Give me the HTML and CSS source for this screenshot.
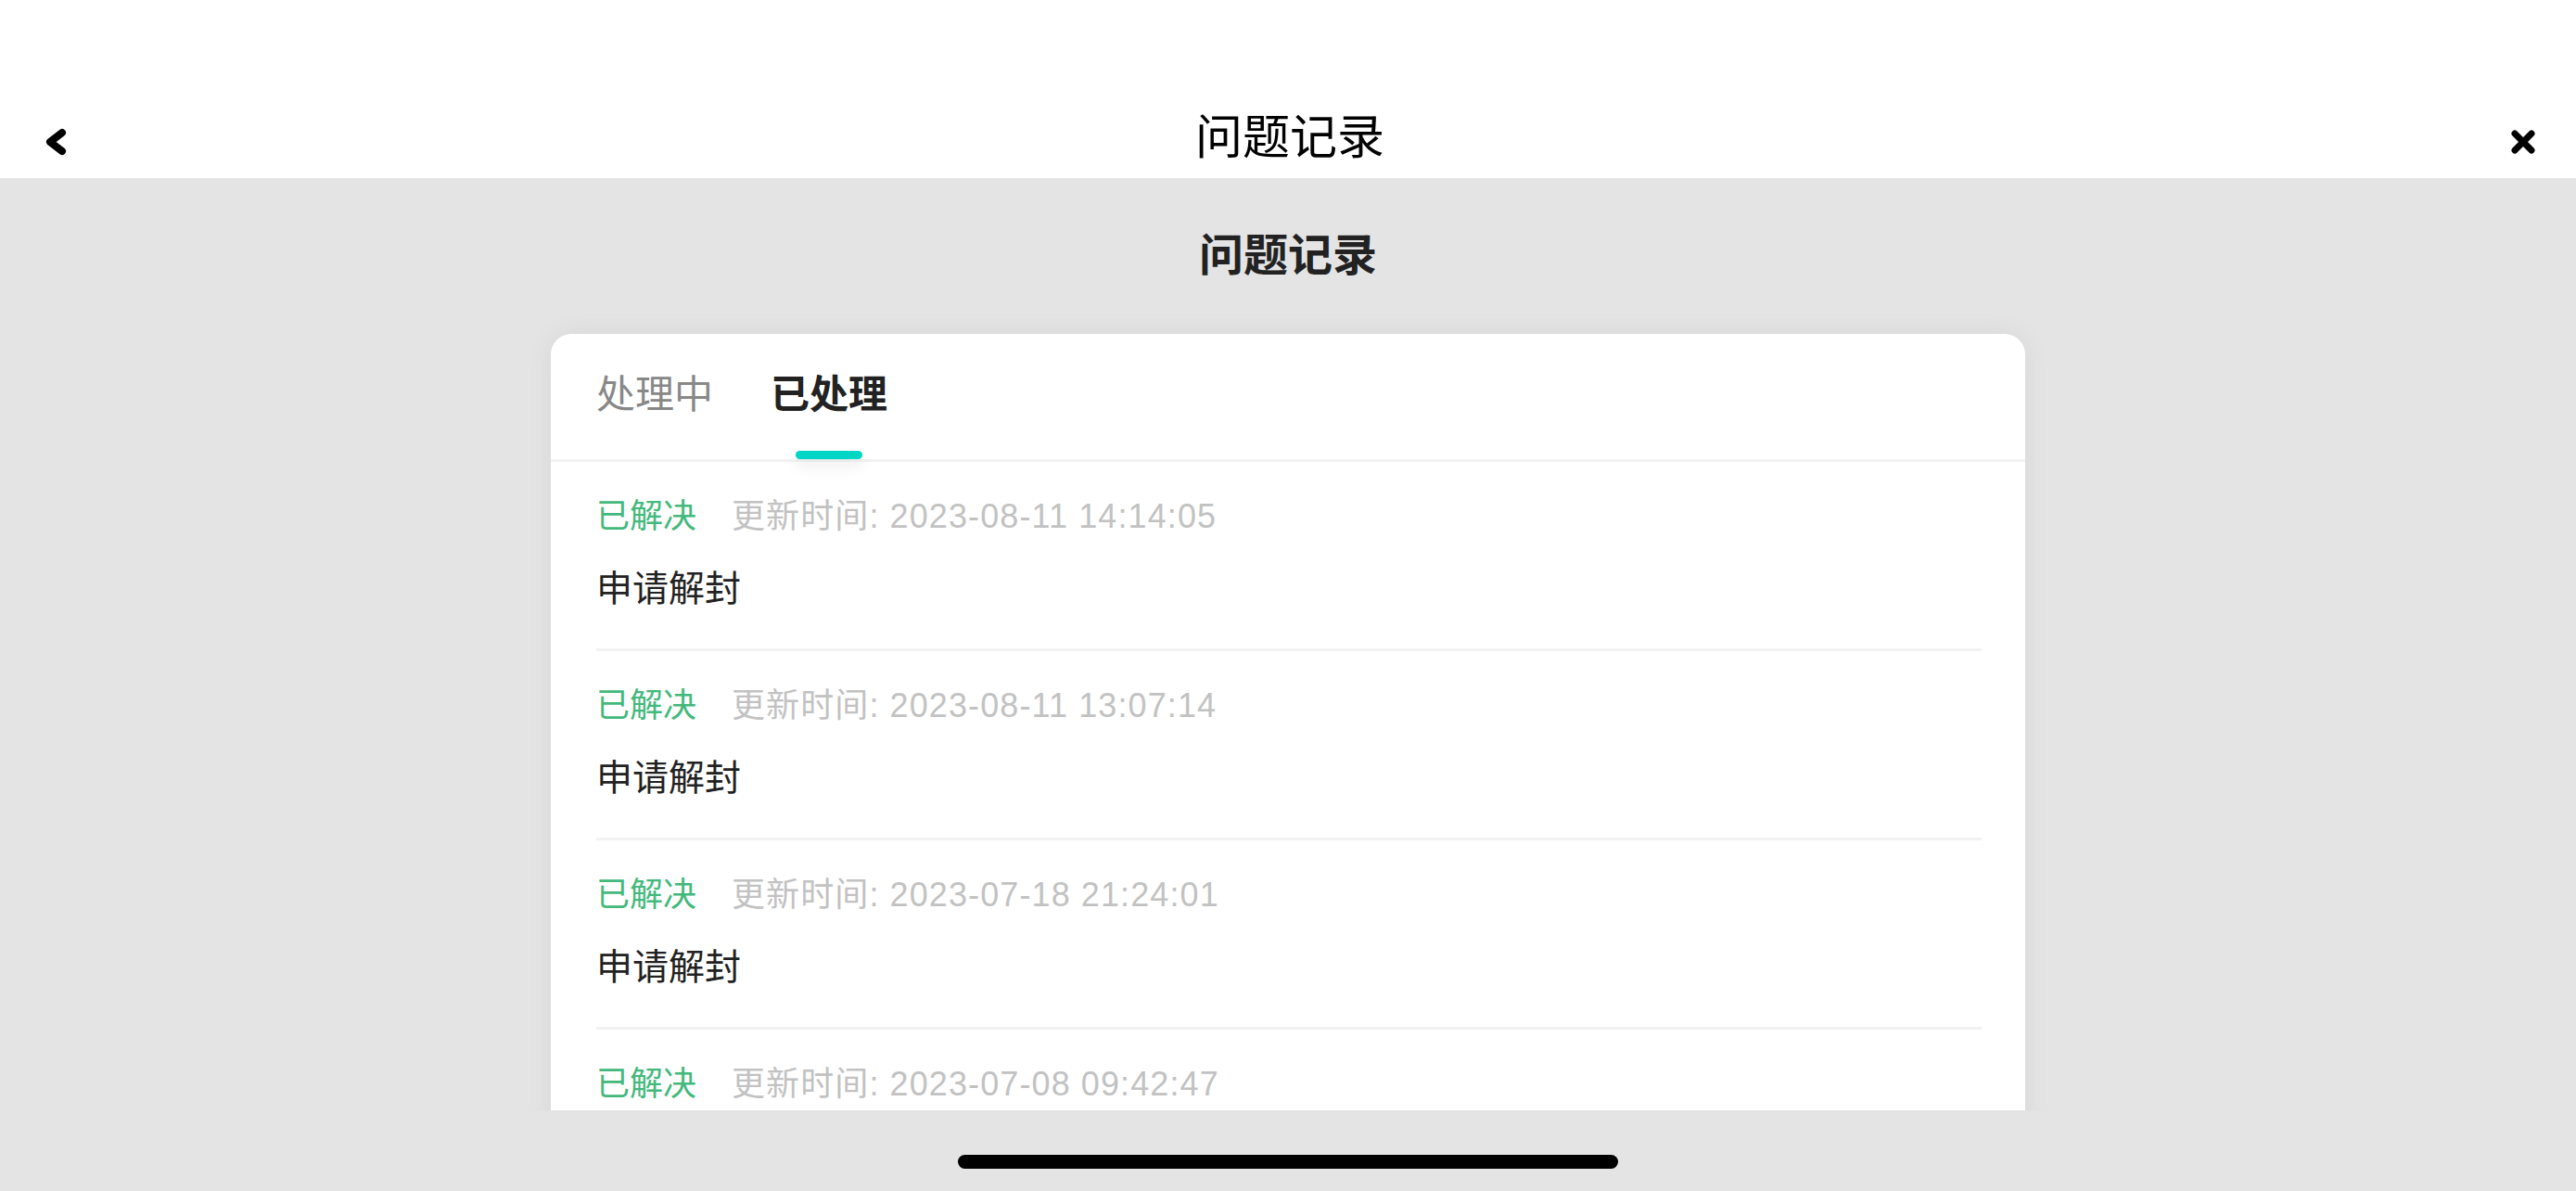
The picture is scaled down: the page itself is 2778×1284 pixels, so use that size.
FILE: index.html
```html
<!DOCTYPE html>
<html lang="zh-CN">
<head>
  <meta charset="UTF-8" />
  <title>问题记录</title>
  <meta name="viewport" content="width=device-width, initial-scale=1.0" />
  <link rel="stylesheet" href="styles.css">
</head>
<body>

  <div class="navbar">
    <div class="nav-row">
      <svg class="nav-icon" width="30" height="30" viewBox="0 0 30 30">
        <polyline points="21,5 8,15 21,25" fill="none" stroke="#000" stroke-width="8" stroke-linecap="round" stroke-linejoin="round" />
      </svg>
      <div class="nav-title">问题记录</div>
      <svg class="nav-icon" width="30" height="30" viewBox="0 0 30 30">
        <line x1="6" y1="6" x2="24" y2="24" stroke="#000" stroke-width="7" stroke-linecap="round" />
        <line x1="24" y1="6" x2="6" y2="24" stroke="#000" stroke-width="7" stroke-linecap="round" />
      </svg>
    </div>
  </div>

  <div class="content">
    <h1 class="page-title">问题记录</h1>

    <div class="card">
      <div class="tabs">
        <div class="tab">
          <span>处理中</span>
        </div>
        <div class="tab active">
          <span>已处理</span>
          <i class="tab-line"></i>
        </div>
      </div>

      <div class="list">
        <div class="item">
          <div class="item-head">
            <span class="status">已解决</span>
            <span class="time">更新时间: 2023-08-11 14:14:05</span>
          </div>
          <div class="item-title">申请解封</div>
        </div>
        <div class="item">
          <div class="item-head">
            <span class="status">已解决</span>
            <span class="time">更新时间: 2023-08-11 13:07:14</span>
          </div>
          <div class="item-title">申请解封</div>
        </div>
        <div class="item">
          <div class="item-head">
            <span class="status">已解决</span>
            <span class="time">更新时间: 2023-07-18 21:24:01</span>
          </div>
          <div class="item-title">申请解封</div>
        </div>
        <div class="item">
          <div class="item-head">
            <span class="status">已解决</span>
            <span class="time">更新时间: 2023-07-08 09:42:47</span>
          </div>
          <div class="item-title">申请解封</div>
        </div>
      </div>
    </div>
  </div>

  <div class="home">
    <div class="home-bar"></div>
  </div>

</body>
</html>
```

FILE: styles.css
```css
html, body {
  margin: 0;
  height: 100%;
}
body {
  background-color: #e4e4e4;
  font-family: 'Liberation Sans', 'Noto Sans CJK SC', sans-serif;
  display: flex;
  flex-direction: column;
  overflow: hidden;
}
.navbar {
  background: #fff;
  padding-top: 106px;
  height: 86px;
}
.nav-row {
  height: 86px;
  display: flex;
  align-items: center;
  justify-content: space-between;
  padding: 0 42px 0 46px;
}
.nav-icon {
  margin-top: 8px;
}
.nav-title {
  font-size: 51px;
  color: #000;
  line-height: 88px;
}
.content {
  flex: 1;
  overflow: hidden;
  padding-top: 54px;
}
.page-title {
  margin: 0 0 54px;
  text-align: center;
  font-size: 48px;
  line-height: 60px;
  font-weight: bold;
  color: #222;
}
.card {
  width: 1590px;
  margin: 0 auto;
  background: #fff;
  border-radius: 22px 22px 0 0;
  box-shadow: 0 0 30px rgba(0, 0, 0, 0.06);
  min-height: 1000px;
}
.tabs {
  display: flex;
  gap: 62px;
  padding: 0 49px;
  border-bottom: 3px solid #f2f2f2;
}
.tab {
  display: flex;
  flex-direction: column;
  align-items: center;
  box-sizing: border-box;
  height: 135px;
  padding-top: 36px;
  font-size: 42px;
  line-height: 60px;
  color: #888;
}
.tab.active {
  color: #222;
  font-weight: bold;
}
.tab-line {
  margin-top: auto;
  width: 72px;
  height: 9px;
  border-radius: 5px;
  background: #00d6c6;
  box-shadow: 0 8px 14px rgba(0, 0, 0, 0.08);
}
.list {
  padding: 0 47px 0 49px;
}
.item {
  padding: 34px 0 39px;
  border-bottom: 3px solid #f2f2f2;
}
.item-head {
  display: flex;
  gap: 38px;
  font-size: 36px;
  line-height: 50px;
}
.status { color: #43b97c; }
.time {
  color: #c2c2c2;
  letter-spacing: 1.1px;
}
.item-title {
  margin-top: 28px;
  font-size: 39px;
  line-height: 50px;
  color: #222;
}
.home {
  height: 87px;
  display: flex;
  justify-content: center;
}
.home-bar {
  margin-top: 48px;
  width: 712px;
  height: 15px;
  border-radius: 8px;
  background: #000;
}
```
